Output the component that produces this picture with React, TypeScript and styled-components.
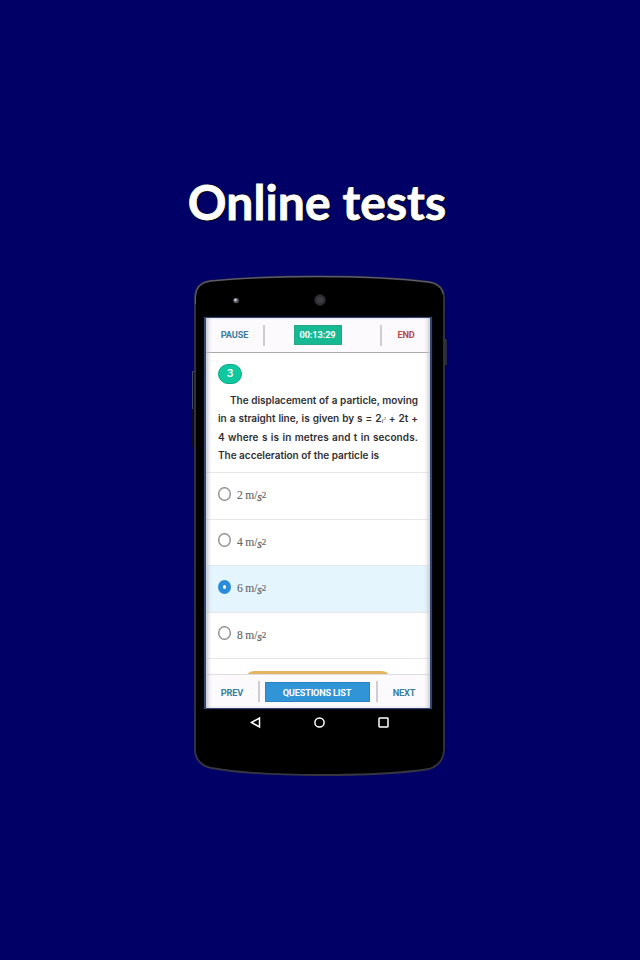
import React from "react";
import styled, { createGlobalStyle } from "styled-components";

const GlobalStyle = createGlobalStyle`
  * { box-sizing: border-box; }
  body { margin: 0; background: #000066; }
`;

const Page = styled.main`
  width: 640px;
  height: 960px;
  overflow: hidden;
  background: #000066;
  display: flex;
  flex-direction: column;
  align-items: center;
  font-family: Roboto, sans-serif;
`;

const Title = styled.h1`
  margin: 172px 0 0;
  height: 102px;
  padding-right: 6px;
  font: 700 48px/60px Lato, sans-serif;
  letter-spacing: 0.1px;
  white-space: nowrap;
  color: #fff;
  -webkit-text-stroke: 0.8px #fff;
  text-shadow: 1px 1px 1px #000, -1px 1px 1px #000, 0 -1px 1px #00002c;
`;

const Phone = styled.section`
  position: relative;
  width: 258px;
  height: 504px;
  display: flex;
  flex-direction: column;
`;

const Shell = styled.svg`
  position: absolute;
  inset: 0;
`;

const Bezel = styled.div`
  height: 43px;
  flex: none;
`;

const Screen = styled.div`
  position: relative;
  margin-left: 13px;
  width: 228px;
  height: 392px;
  flex: none;
  display: flex;
  flex-direction: column;
  overflow: hidden;
  background: #fff;
  border: 1px solid #34456f;
  border-left-width: 2px;
  border-right-width: 2px;
  box-shadow: 0 0 1px #202f65;
  &::after {
    content: "";
    position: absolute;
    inset: 0;
    pointer-events: none;
    box-shadow: inset 4px 0 4px -2px #bfc1cb, inset -4px 0 4px -2px #c5c6cf;
  }
`;

const Bar = styled.div<{ $bottom?: boolean }>`
  height: ${(p) => (p.$bottom ? 34 : 35)}px;
  flex: none;
  display: flex;
  align-items: center;
  background: #fcfafd;
  border-bottom: ${(p) => (p.$bottom ? "0" : "1px solid #aaa9ad")};
  border-top: ${(p) => (p.$bottom ? "1px solid #dedde1" : "0")};
`;

const BarAction = styled.button<{ $width: number; $color?: string; $drop?: number }>`
  width: ${(p) => p.$width}px;
  padding: ${(p) => p.$drop ?? 0}px 0 0;
  border: 0;
  background: none;
  text-align: center;
  white-space: nowrap;
  font: 700 9.2px/12px Roboto, sans-serif;
  letter-spacing: -0.15px;
  color: ${(p) => p.$color ?? "#397f9c"};
`;

const Divider = styled.span`
  width: 2px;
  height: 21px;
  flex: none;
  background: #cfcdd2;
`;

const Middle = styled.div<{ $shift: number }>`
  flex: 1;
  display: flex;
  justify-content: center;
  padding-right: ${(p) => p.$shift}px;
`;

const Chip = styled.div<{ $width: number; $blue?: boolean }>`
  width: ${(p) => p.$width}px;
  height: 20px;
  flex: none;
  text-align: center;
  white-space: nowrap;
  padding-top: ${(p) => (p.$blue ? 1 : 0)}px;
  font: 700 9.2px/17px Roboto, sans-serif;
  letter-spacing: ${(p) => (p.$blue ? -0.2 : -0.1)}px;
  color: #fff;
  background: ${(p) => (p.$blue ? "#3194d7" : "#17b992")};
  border: 1px solid ${(p) => (p.$blue ? "#2a84c1" : "#24a785")};
`;

const Question = styled.div`
  height: 120px;
  flex: none;
  padding: 11px 12px 0;
  border-bottom: 1px solid #e7e7e9;
`;

const Badge = styled.div`
  width: 24px;
  height: 20px;
  border-radius: 10px;
  background: #10c89f;
  border: 1px solid #12a886;
  color: #fff;
  font: 600 10.5px/18px Inter, sans-serif;
  text-align: center;
`;

const Lines = styled.div`
  padding-top: 6.6px;
`;

const Line = styled.div<{ $indent?: number; $width?: number; $spacing?: number }>`
  margin-left: ${(p) => p.$indent ?? 0}px;
  width: ${(p) => p.$width ?? 200}px;
  height: 18.6px;
  font: 600 10px/18.6px Inter, sans-serif;
  letter-spacing: ${(p) => p.$spacing ?? -0.02}px;
  word-spacing: -1px;
  color: #303034;
  white-space: nowrap;
  text-align: justify;
  text-align-last: justify;
`;

const TinyMath = styled.span`
  display: inline-block;
  font: italic 7px/8px "Liberation Serif", serif;
  transform: translateY(1px);
  & sup { font-size: 5px; line-height: 0; }
`;

const Option = styled.label<{ $selected: boolean; $height: number }>`
  height: ${(p) => p.$height}px;
  flex: none;
  display: flex;
  align-items: center;
  gap: 6px;
  padding-left: 12px;
  padding-bottom: 3px;
  background: ${(p) => (p.$selected ? "#e4f5fe" : "#fff")};
  border-bottom: 1px solid #e5e7ea;
`;

const Radio = styled.span<{ $selected: boolean }>`
  width: 13px;
  height: 14px;
  margin-top: -2px;
  border-radius: 50%;
  border: ${(p) => (p.$selected ? "5px solid #2a8bdb" : "1.5px solid #8c8c8f")};
  box-shadow: ${(p) => (p.$selected ? "none" : "inset 0 0 0 0.5px #9c9c9f")};
  background: #fff;
`;

const Unit = styled.span`
  display: inline-flex;
  align-items: baseline;
  padding-top: 1px;
  font: 11.5px/14px "Liberation Serif", serif;
  letter-spacing: -0.15px;
  color: #66666a;
  white-space: pre;
  -webkit-text-stroke: 0.15px #66666a;
  & i { font-size: 12px; transform: translateY(2px); -webkit-text-stroke-width: 0.3px; }
  & sup { font-size: 9px; line-height: 8px; transform: translateY(-1px); vertical-align: baseline; }
`;

const Peek = styled.div`
  flex: 1;
  display: flex;
  align-items: flex-end;
  justify-content: center;
  padding-right: 1px;
`;

const AmberEdge = styled.div`
  width: 140px;
  height: 3px;
  border-radius: 7px 7px 0 0 / 3px 3px 0 0;
  background: #e5b45e;
`;

const Navigation = styled.nav`
  position: relative;
  height: 27px;
  padding-left: 58px;
  display: flex;
  align-items: center;
  gap: 51px;
  & svg { display: block; fill: none; stroke: #fff; stroke-width: 1.5; }
`;

const OPTIONS = [
  { value: "2", height: 47 },
  { value: "4", height: 46 },
  { value: "6", height: 47 },
  { value: "8", height: 46 },
];

function PhoneShell() {
  return (
    <Shell width="258" height="504" viewBox="0 0 258 504" aria-hidden="true">
      <path d="M4 97H2q-1 0-1 2v73q0 2 1 2h2M253 64q3 0 3 2v25q0 2-3 2" fill="#080b22" />
      <path d="M3 97.5H1.5V135M253 65q2 0 2 2v24" fill="none" stroke="#5a5c80" strokeWidth="0.8" />
      <path
        d="M4 24Q4 9 19 7Q65 2.5 129 2.5Q193 2.5 238 8Q253 10 253 25V475Q253 490 238 495Q200 501 129 501Q60 501 20 494Q4 490 4 475Z"
        fill="#000"
        stroke="#373540"
        strokeWidth="1.8"
      />
      <path d="M4.5 30V23Q5 9 19 7Q65 2.5 129 2.5Q193 2.5 238 8Q250 10 252.5 20" fill="none" stroke="#716f7b" strokeWidth="0.8" />
      <circle cx="45" cy="26.5" r="2.8" fill="#555563" />
      <circle cx="44.5" cy="26" r="1.2" fill="#ddd" />
      <circle cx="129" cy="26" r="5.7" fill="#2d2d30" />
      <circle cx="129" cy="26" r="3.3" fill="#3e3c40" />
    </Shell>
  );
}

export default function App() {
  return (
    <>
      <GlobalStyle />
      <Page>
        <Title>Online tests</Title>
        <Phone>
          <PhoneShell />
          <Bezel />
          <Screen>
            <Bar>
              <BarAction $width={57}>PAUSE</BarAction>
              <Divider />
              <Middle $shift={10}><Chip $width={48}>00:13:29</Chip></Middle>
              <Divider />
              <BarAction $width={48} $color="#b4494b">END</BarAction>
            </Bar>
            <Question>
              <Badge>3</Badge>
              <Lines>
                <Line $indent={12} $width={188}>The displacement of a particle, moving</Line>
                <Line>in a straight line, is given by s = 2<TinyMath>t<sup>2</sup></TinyMath> + 2t +</Line>
                <Line $spacing={0.08}>4 where s is in metres and t in seconds.</Line>
                <Line $width={161}>The acceleration of the particle is</Line>
              </Lines>
            </Question>
            {OPTIONS.map(({ value, height }) => (
              <Option key={value} $selected={value === "6"} $height={height}>
                <Radio $selected={value === "6"} />
                <Unit>{value} m/<i>s</i><sup>2</sup></Unit>
              </Option>
            ))}
            <Peek><AmberEdge /></Peek>
            <Bar $bottom>
              <BarAction $width={52} $drop={2}>PREV</BarAction>
              <Divider />
              <Middle $shift={2}><Chip $width={105} $blue>QUESTIONS LIST</Chip></Middle>
              <Divider />
              <BarAction $width={52} $drop={2}>NEXT</BarAction>
            </Bar>
          </Screen>
          <Navigation>
            <svg width="13" height="13" viewBox="0 0 13 13"><path d="M10.5 2v9L2.5 6.5Z" /></svg>
            <svg width="13" height="13" viewBox="0 0 13 13"><circle cx="6.5" cy="6.5" r="4.6" /></svg>
            <svg width="13" height="13" viewBox="0 0 13 13"><rect x="2" y="2" width="9" height="9" rx="0.7" /></svg>
          </Navigation>
        </Phone>
      </Page>
    </>
  );
}
